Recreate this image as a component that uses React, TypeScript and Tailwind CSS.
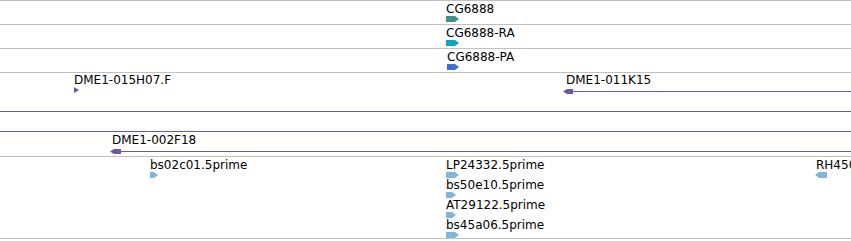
import React from "react";

type ArrowProps = { w: number; h?: number; color: string; dir?: "r" | "l"; tip?: number; className?: string };

function Arrow({ w, h = 6, color, dir = "r", tip = 4, className = "" }: ArrowProps) {
  const pts =
    dir === "r"
      ? `0,0 ${w - tip},0 ${w},${h / 2} ${w - tip},${h} 0,${h}`
      : `${tip},0 ${w},0 ${w},${h} ${tip},${h} 0,${h / 2}`;
  return (
    <svg className={`block shrink-0 ${className}`} width={w} height={h} viewBox={`0 0 ${w} ${h}`}>
      <polygon points={pts} fill={color} />
    </svg>
  );
}

type Feat = { label: string; w: number; color: string; dir?: "r" | "l"; tip?: number };

/* A feature placed on the track canvas: its x is genomic position, so it is positioned. */
function Feature({ x, items, className = "pt-[2px]" }: { x: number; items: Feat[]; className?: string }) {
  return (
    <div className={`absolute top-0 flex flex-col gap-[1px] ${className}`} style={{ left: x }}>
      {items.map((f) => (
        <div key={f.label} className="flex flex-col gap-[1px]">
          <span className="whitespace-nowrap text-[12px] leading-[12px] text-black">{f.label}</span>
          <Arrow w={f.w} color={f.color} dir={f.dir} tip={f.tip} className={f.dir === "l" ? "-ml-[1px]" : ""} />
        </div>
      ))}
    </div>
  );
}

function Track({ children, className = "" }: { children: React.ReactNode; className?: string }) {
  return <div className={`relative border-t border-[#c0c0c0] ${className}`}>{children}</div>;
}

function Clone({ x, label, arrowW, shift, topPad, widthToEdge }: { x: number; label: string; arrowW: number; shift: string; topPad: string; widthToEdge: number }) {
  return (
    <div className={`absolute top-0 flex flex-col gap-[3px] ${topPad}`} style={{ left: x, width: widthToEdge }}>
      <span className="whitespace-nowrap text-[12px] leading-[12px] text-black">{label}</span>
      <div className={`flex items-center ${shift}`}>
        <Arrow w={arrowW} h={5} color="#6f55a8" dir="l" />
        <div className="h-px flex-1 bg-[#6f57a6]" />
      </div>
    </div>
  );
}

export default function App() {
  const purple = "#6f55a8";
  const est = "#7eb6de";
  return (
    <div
      className="w-[851px] h-[241px] bg-white overflow-hidden"
      style={{ fontFamily: '"DejaVu Sans", sans-serif' }}
    >
      <div className="flex flex-col w-full border-b border-[#c0c0c0]">
        <Track className="h-[24px]">
          <Feature x={446} items={[{ label: "CG6888", w: 13, color: "#41928f" }]} />
        </Track>
        <Track className="h-[24px]">
          <Feature x={446} items={[{ label: "CG6888-RA", w: 13, color: "#13a2c4" }]} />
        </Track>
        <Track className="h-[24px]">
          <Feature x={447} items={[{ label: "CG6888-PA", w: 12, color: "#3b70d6" }]} />
        </Track>
        <Track className="h-[84px]">
          <div className="flex flex-col">
            <div className="relative h-[19px]">
              <Feature x={74} className="pt-[1px]" items={[{ label: "DME1-015H07.F", w: 5, color: purple, tip: 5 }]} />
              <Clone x={566} label="DME1-011K15" arrowW={10} shift="-ml-[3px]" topPad="pt-[1px]" widthToEdge={285} />
            </div>
            <div className="h-[20px] border-b border-[#6f57a6]" />
            <div className="h-[20px] border-b border-[#6f57a6]" />
            <div className="relative h-[24px]">
              <Clone x={112} label="DME1-002F18" arrowW={11} shift="-ml-[2px]" topPad="pt-[2px]" widthToEdge={739} />
            </div>
          </div>
        </Track>
        <Track className="h-[82px]">
          <Feature x={150} items={[{ label: "bs02c01.5prime", w: 8, color: est }]} />
          <Feature
            x={446}
            items={[
              { label: "LP24332.5prime", w: 13, color: est },
              { label: "bs50e10.5prime", w: 10, color: est },
              { label: "AT29122.5prime", w: 10, color: est },
              { label: "bs45a06.5prime", w: 13, color: est },
            ]}
          />
          <Feature x={816} items={[{ label: "RH450", w: 12, color: est, dir: "l" }]} />
        </Track>
      </div>
    </div>
  );
}
